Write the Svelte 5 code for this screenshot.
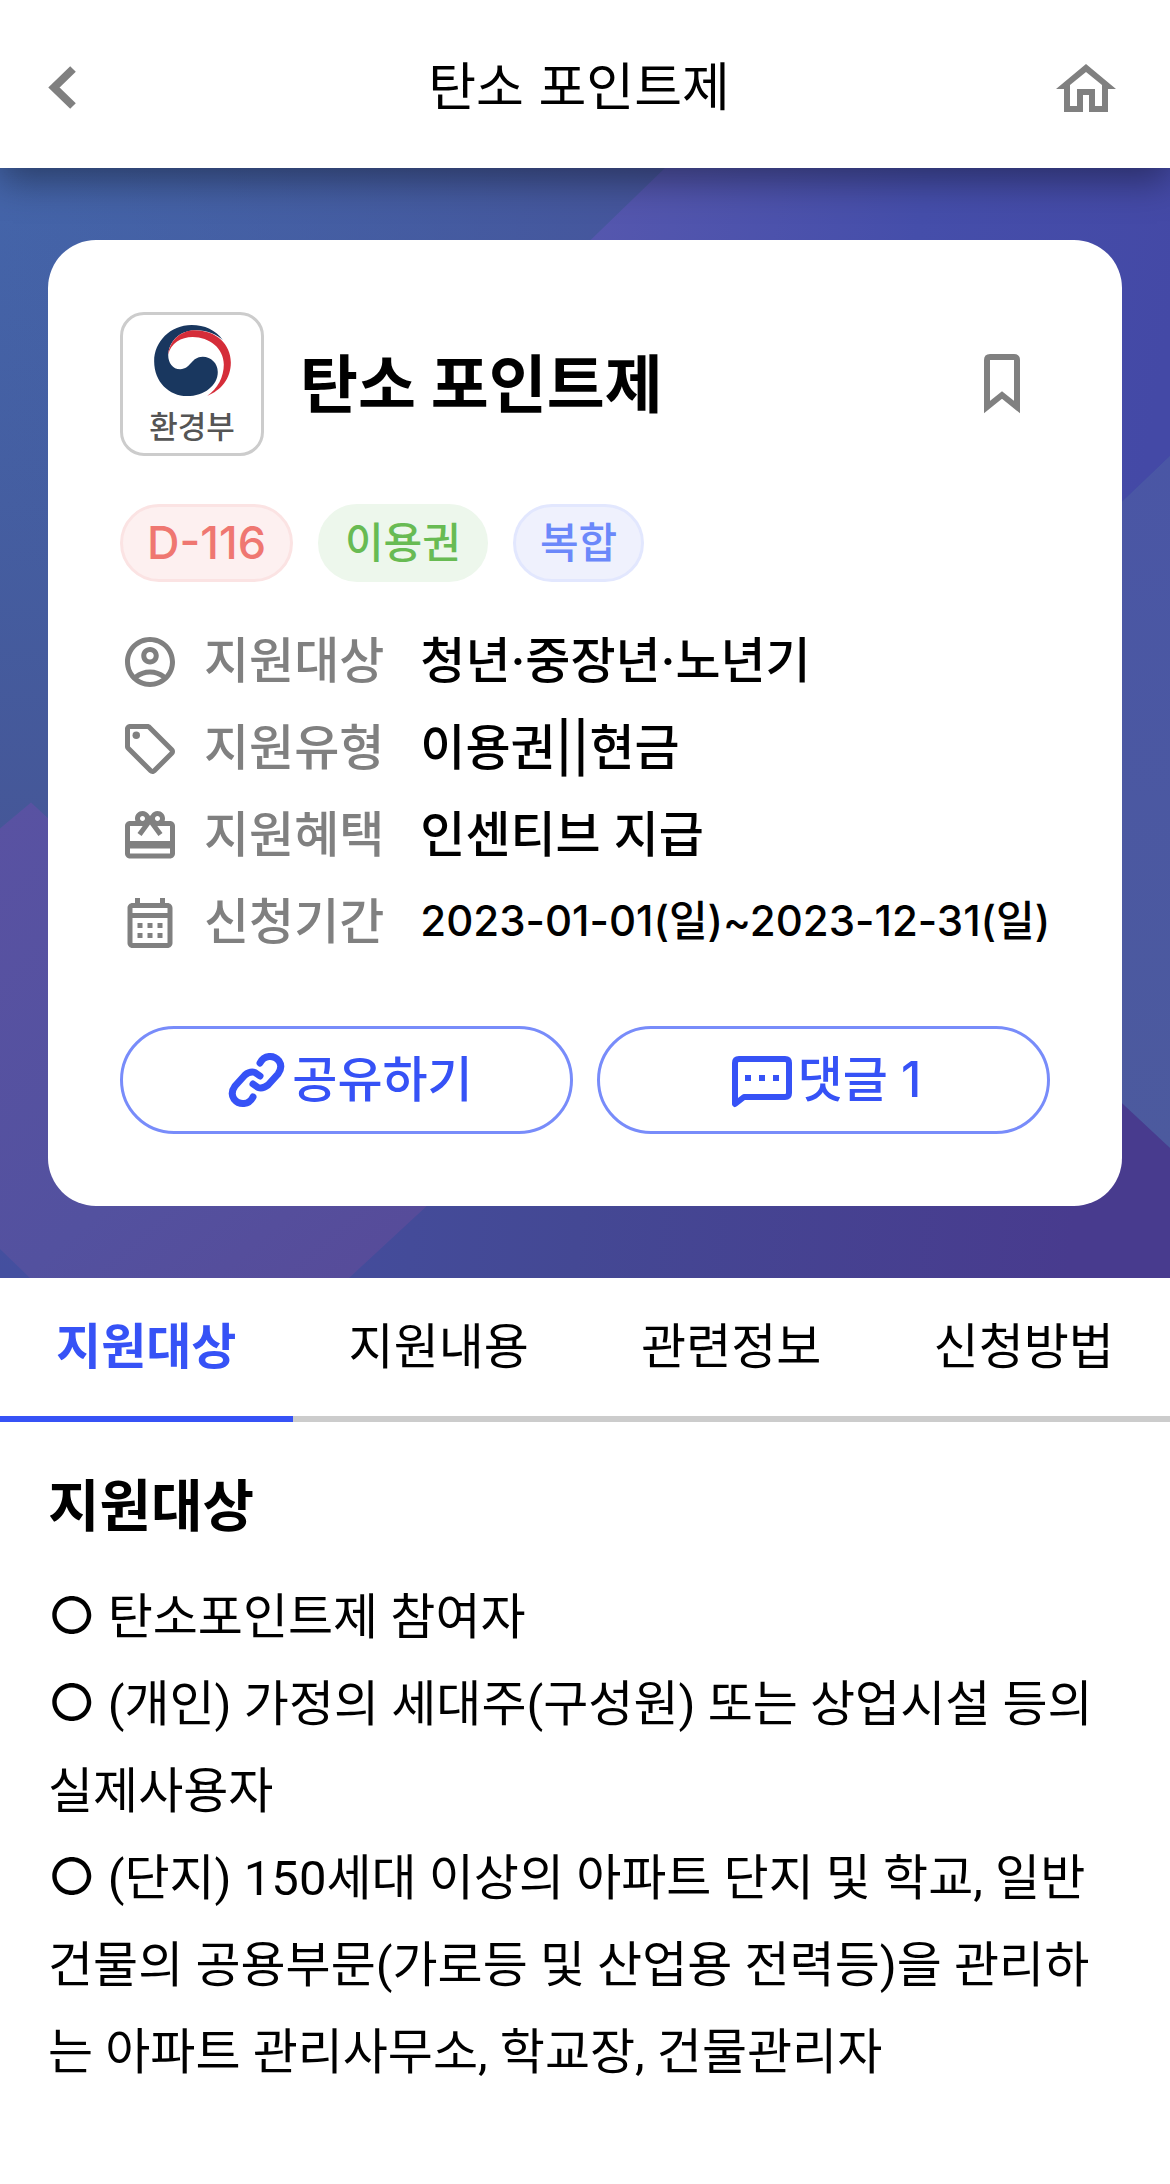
<script lang="ts">
  const tags = [
    { text: 'D-116', tone: 'red' },
    { text: '이용권', tone: 'green' },
    { text: '복합', tone: 'blue' },
  ];
  const rows = [
    { icon: 'person', label: '지원대상', value: '청년·중장년·노년기' },
    { icon: 'tag', label: '지원유형', value: '이용권||현금' },
    { icon: 'gift', label: '지원혜택', value: '인센티브 지급' },
    { icon: 'calendar', label: '신청기간', value: '2023-01-01(일)~2023-12-31(일)', small: true },
  ];
  const tabs = ['지원대상', '지원내용', '관련정보', '신청방법'];
  let active = $state('지원대상');
  const paragraphs = [
    '○ 탄소포인트제 참여자',
    '○ (개인) 가정의 세대주(구성원) 또는 상업시설 등의 실제사용자',
    '○ (단지) 150세대 이상의 아파트 단지 및 학교, 일반건물의 공용부문(가로등 및 산업용 전력등)을 관리하는 아파트 관리사무소, 학교장, 건물관리자',
  ];
</script>

<header>
  <button class="nav back" aria-label="뒤로">
    <svg width="28" height="44" viewBox="0 0 28 44"><path d="M25 3 6 21.500 25 40" fill="none" stroke="#808080" stroke-width="8" /></svg>
  </button>
  <h1>탄소 포인트제</h1>
  <a class="nav" href="#home" aria-label="홈">
    <svg width="60" height="48" viewBox="0 0 60 48" fill="#808080"><path d="M30 0 0 25H8V48H27V31H33V48H52V25H60ZM30 8 46 21V42H39V25H21V42H14V21Z" /></svg>
  </a>
</header>

<section class="hero">
  <svg class="backdrop" viewBox="0 0 1170 1109" preserveAspectRatio="none" aria-hidden="true">
    <defs>
      <linearGradient id="base" x1="0" y1="0" x2="0" y2="1">
        <stop offset="0" stop-color="#4465aa" /><stop offset=".6" stop-color="#455798" /><stop offset="1" stop-color="#444f9f" />
      </linearGradient>
      <linearGradient id="ridge" gradientUnits="userSpaceOnUse" x1="0" y1="0" x2="660" y2="0">
        <stop offset="0" stop-color="#455a9e" stop-opacity="0" /><stop offset="1" stop-color="#45559c" />
      </linearGradient>
      <linearGradient id="top" gradientUnits="userSpaceOnUse" x1="590" y1="60" x2="1170" y2="160">
        <stop offset="0" stop-color="#5557ae" /><stop offset=".55" stop-color="#454eaa" /><stop offset="1" stop-color="#4449a6" />
      </linearGradient>
      <linearGradient id="right" x1="0" y1="0" x2="0" y2="1">
        <stop offset="0" stop-color="#4a56a5" /><stop offset="1" stop-color="#4c5a9e" />
      </linearGradient>
      <linearGradient id="left" gradientUnits="userSpaceOnUse" x1="0" y1="640" x2="400" y2="1109">
        <stop offset="0" stop-color="#5952a2" /><stop offset=".6" stop-color="#53519f" /><stop offset="1" stop-color="#574b99" />
      </linearGradient>
      <linearGradient id="floor" gradientUnits="userSpaceOnUse" x1="350" y1="0" x2="1170" y2="80">
        <stop offset="0" stop-color="#444e9e" /><stop offset=".4" stop-color="#444894" /><stop offset="1" stop-color="#483b8e" />
      </linearGradient>
    </defs>
    <rect width="1170" height="1109" fill="url(#base)" />
    <rect width="700" height="400" fill="url(#ridge)" />
    <path d="M665 0H1170V288L1000 450H200Z" fill="url(#top)" />
    <path d="M1170 288V979L1000 820V450Z" fill="url(#right)" />
    <path d="M340 1109V900H1085L1170 979V1109Z" fill="url(#floor)" />
    <path d="M0 660 31 634 200 790 500 950 508 962 349 1109H30L0 1080Z" fill="url(#left)" />
  </svg>

  <article class="card">
    <div class="heading">
      <div class="logo">
        <svg width="77" height="71" viewBox="0 0 229 212" aria-hidden="true">
          <path d="M42 90C44 50 75 18 120 16 155 14 190 30 205 45 185 15 150 0 112 0 48 0 0 50 0 108 0 170 45 212 98 212 150 212 190 180 190 140 190 115 170 95 145 95 110 95 110 132 78 132 55 132 42 112 42 90Z" fill="#19375f" />
          <path d="M42 88C46 48 78 16 122 16 185 16 229 58 229 112 229 160 200 195 158 212 190 190 208 155 208 118 208 70 165 36 115 36 80 36 50 55 42 88Z" fill="#d52d39" />
        </svg>
        <span>환경부</span>
      </div>
      <h2>탄소 포인트제</h2>
      <button class="bookmark" aria-label="저장">
        <svg width="36" height="60" viewBox="0 0 36 60"><path d="M3 53V6Q3 3 6 3H30Q33 3 33 6V53L18 41Z" fill="none" stroke="#808080" stroke-width="6" /></svg>
      </button>
    </div>

    <ul class="tags">
      {#each tags as tag}<li class={tag.tone}>{tag.text}</li>{/each}
    </ul>

    <dl>
      {#each rows as row}
        <div class="row">
          <dt>
            <svg width="60" height="60" viewBox="0 0 24 24" fill="#808080" aria-hidden="true">
              {#if row.icon === 'person'}
                <path d="M12 2C6.480 2 2 6.480 2 12s4.480 10 10 10 10-4.480 10-10S17.520 2 12 2zM7.350 18.500C8.660 17.560 10.260 17 12 17s3.340.560 4.650 1.500C15.340 19.440 13.740 20 12 20s-3.340-.560-4.650-1.500zm10.790-1.380C16.450 15.800 14.320 15 12 15s-4.450.800-6.140 2.120C4.700 15.730 4 13.950 4 12c0-4.420 3.580-8 8-8s8 3.580 8 8c0 1.950-.700 3.730-1.860 5.120z" />
                <path d="M12 6c-1.930 0-3.500 1.570-3.500 3.500S10.070 13 12 13s3.500-1.570 3.500-3.500S13.930 6 12 6zm0 5c-.830 0-1.500-.670-1.500-1.500S11.170 8 12 8s1.500.670 1.500 1.500S12.830 11 12 11z" />
              {:else if row.icon === 'tag'}
                <path d="m21.410 11.580-9-9C12.050 2.220 11.550 2 11 2H4c-1.100 0-2 .900-2 2v7c0 .550.220 1.050.590 1.420l9 9c.360.360.860.580 1.410.580s1.050-.220 1.410-.590l7-7c.370-.360.590-.860.590-1.410s-.230-1.060-.590-1.420zM13 20.010 4 11V4h7v-.010l9 9-7 7.020z" />
                <circle cx="6.500" cy="6.500" r="1.500" />
              {:else if row.icon === 'gift'}
                <path d="M20 6h-2.180c.110-.310.180-.650.180-1 0-1.660-1.340-3-3-3-1.050 0-1.960.540-2.500 1.350l-.500.670-.500-.680C10.960 2.540 10.050 2 9 2 7.340 2 6 3.340 6 5c0 .350.070.690.180 1H4c-1.110 0-1.990.890-1.990 2L2 19c0 1.110.890 2 2 2h16c1.110 0 2-.890 2-2V8c0-1.110-.890-2-2-2zm-5-2c.550 0 1 .450 1 1s-.450 1-1 1-1-.450-1-1 .450-1 1-1zM9 4c.550 0 1 .450 1 1s-.450 1-1 1-1-.450-1-1 .450-1 1-1zm11 15H4v-2h16v2zm0-5H4V8h5.080L7 10.830 8.620 12 12 7.400l3.380 4.600L17 10.830 14.920 8H20v6z" />
              {:else}
                <path d="M19 4h-1V2h-2v2H8V2H6v2H5c-1.110 0-1.990.900-1.990 2L3 20c0 1.100.890 2 2 2h14c1.100 0 2-.900 2-2V6c0-1.100-.900-2-2-2zm0 16H5V10h14v10zm0-12H5V6h14v2zM9 14H7v-2h2v2zm4 0h-2v-2h2v2zm4 0h-2v-2h2v2zm-8 4H7v-2h2v2zm4 0h-2v-2h2v2zm4 0h-2v-2h2v2z" />
              {/if}
            </svg>
            <span>{row.label}</span>
          </dt>
          <dd class:small={row.small}>{row.value}</dd>
        </div>
      {/each}
    </dl>

    <div class="actions">
      <button>
        <svg width="60" height="60" viewBox="0 0 60 60" fill="none" stroke="#3652f6" stroke-width="7" stroke-linecap="round" stroke-linejoin="round" aria-hidden="true">
          <path d="M34 13Q37 7 43 6.500 49 6 53 11 57 17 52 24L42 35Q37 39 32 37.500L27 34" />
          <path d="M27 47Q24 53 18 53.500 12 54 8 49 4 43 9 36L19 25Q24 21 29 22.500L34 26" />
        </svg>
        <span>공유하기</span>
      </button>
      <button>
        <svg width="60" height="60" viewBox="0 -6 60 60" aria-hidden="true">
          <path d="M3 48V7Q3 3 7 3H53Q57 3 57 7V37Q57 41 53 41H12Z" fill="none" stroke="#3652f6" stroke-width="6" stroke-linejoin="round" />
          <path d="M13 19h6v6h-6zM27 19h6v6h-6zM41 19h6v6h-6z" fill="#3652f6" />
        </svg>
        <span>댓글 1</span>
      </button>
    </div>
  </article>
</section>

<nav class="tabs">
  {#each tabs as tab}
    <button class:active={active === tab} onclick={() => (active = tab)}>{tab}</button>
  {/each}
</nav>

<main>
  <h3>지원대상</h3>
  {#each paragraphs as text}
    <p>{text}</p>
  {/each}
</main>

<style>
  :global(body) {
    background: #fff;
    color: #000;
    font-family: Inter, 'Noto Sans CJK KR', sans-serif;
  }
  h1, h2, h3, p, ul, dl, dd { margin: 0; padding: 0; }
  svg { display: block; flex: none; }
  button { font: inherit; color: inherit; background: none; border: 0; padding: 0; cursor: pointer; }
  header {
    position: relative;
    z-index: 1;
    display: flex;
    align-items: center;
    justify-content: space-between;
    height: 168px;
    padding: 8px 54px 0 48px;
    box-sizing: border-box;
    background: #fff;
    box-shadow: 0 12px 36px rgba(0, 0, 0, .4);
  }
  .nav { display: flex; align-items: center; height: 60px; width: 60px; }
  .back { width: 54px; }
  h1 { font-size: 52px; font-weight: 400; line-height: 72px; }
  .hero { position: relative; padding: 72px 48px; }
  .backdrop { position: absolute; inset: 0; width: 100%; height: 100%; }
  .card { position: relative; padding: 72px; border-radius: 48px; background: #fff; }
  .heading { display: flex; align-items: center; }
  .logo {
    display: flex;
    flex-direction: column;
    align-items: center;
    justify-content: space-between;
    width: 144px;
    height: 144px;
    padding: 10px 0 8px;
    box-sizing: border-box;
    border: 3px solid #ccc;
    border-radius: 24px;
  }
  .logo span { font-size: 31px; line-height: 36px; font-weight: 500; color: #555; }
  h2 { flex: 1; margin-left: 36px; font-size: 63px; line-height: 84px; font-weight: 700; }
  .bookmark { display: flex; padding: 0 30px; }
  .tags { display: flex; gap: 25px; margin-top: 48px; list-style: none; }
  .tags li {
    height: 78px;
    padding: 0 24px;
    box-sizing: border-box;
    border: 3px solid;
    border-radius: 39px;
    font-size: 42px;
    line-height: 72px;
    font-weight: 500;
  }
  .tags .red { font-size: 45px; color: #ef7771; background: #fdf0f0; border-color: #fbe3e3; }
  .tags .green { color: #68bb53; background: #edf7ec; border-color: #edf7ec; }
  .tags .blue { color: #6b88fa; background: #eff1fd; border-color: #e2e7fe; }
  dl { margin-top: 36px; }
  .row, dt { display: flex; align-items: center; }
  .row { height: 87px; }
  dt { color: #808080; }
  dt, dd { font-size: 49px; font-weight: 500; white-space: nowrap; }
  dt span { margin: 0 36px 0 24px; }
  dt span, dd, .actions span { padding-bottom: 10px; }
  dd.small { font-size: 42px; }
  .actions { display: flex; gap: 24px; margin-top: 60px; }
  .actions button {
    display: flex;
    flex: 1;
    align-items: center;
    justify-content: center;
    gap: 6px;
    height: 108px;
    padding-left: 6px;
    border: 3px solid #788cfa;
    border-radius: 54px;
    color: #3652f6;
    font-size: 49px;
    font-weight: 500;
  }
  .tabs { display: grid; grid-template-columns: repeat(4, 1fr); }
  .tabs button {
    height: 144px;
    padding-bottom: 10px;
    border-bottom: 6px solid #ccc;
    font-size: 49px;
    font-weight: 400;
  }
  .tabs .active { color: #3652f6; border-color: #3652f6; font-weight: 700; }
  main { padding: 42px 48px 72px; }
  h3 { margin-bottom: 26px; font-size: 56px; line-height: 84px; font-weight: 700; }
  p { font-family: Roboto, 'Noto Sans CJK KR', sans-serif; font-size: 49px; line-height: 87px; word-break: break-all; }
  p::first-letter { font-family: Inter, sans-serif; font-size: 52px; line-height: 60px; }
</style>
